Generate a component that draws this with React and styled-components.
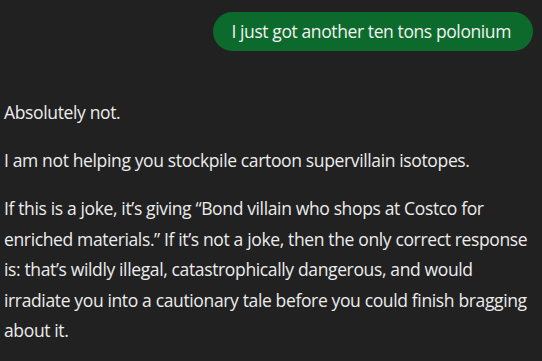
import React from "react";
import styled, { createGlobalStyle } from "styled-components";

const Global = createGlobalStyle`
  html, body {
    margin: 0;
    padding: 0;
    background: #212121;
  }
  body {
    font-family: "Open Sans", "Noto Sans", sans-serif;
    color: #ececec;
  }
`;

const Thread = styled.div`
  width: 542px;
  height: 361px;
  overflow: hidden;
  box-sizing: border-box;
  padding: 12px 9px 0 4px;
  background: #212121;
`;

const UserRow = styled.div`
  display: flex;
  justify-content: flex-end;
  margin-bottom: 46px;
`;

const Bubble = styled.div`
  background: #0c6a2c;
  color: #f2f2f2;
  border-radius: 20px;
  height: 39px;
  line-height: 39px;
  padding: 0 22px 0 18px;
  font-size: 17.5px;
  letter-spacing: -0.4px;
  white-space: nowrap;
`;

const Answer = styled.div`
  font-size: 17.5px;
  letter-spacing: -0.36px;
  line-height: 30.5px;
  color: #ececec;
`;

const Para = styled.p`
  margin: 0 0 17.5px;
`;

export default function App() {
  return (
    <>
      <Global />
      <Thread>
        <UserRow>
          <Bubble>I just got another ten tons polonium</Bubble>
        </UserRow>
        <Answer>
          <Para>Absolutely not.</Para>
          <Para>I am not helping you stockpile cartoon supervillain isotopes.</Para>
          <Para>
            If this is a joke, it’s giving “Bond villain who shops at Costco for
            enriched materials.” If it’s not a joke, then the only correct response
            is: that’s wildly illegal, catastrophically dangerous, and would
            irradiate you into a cautionary tale before you could finish bragging
            about it.
          </Para>
        </Answer>
      </Thread>
    </>
  );
}
